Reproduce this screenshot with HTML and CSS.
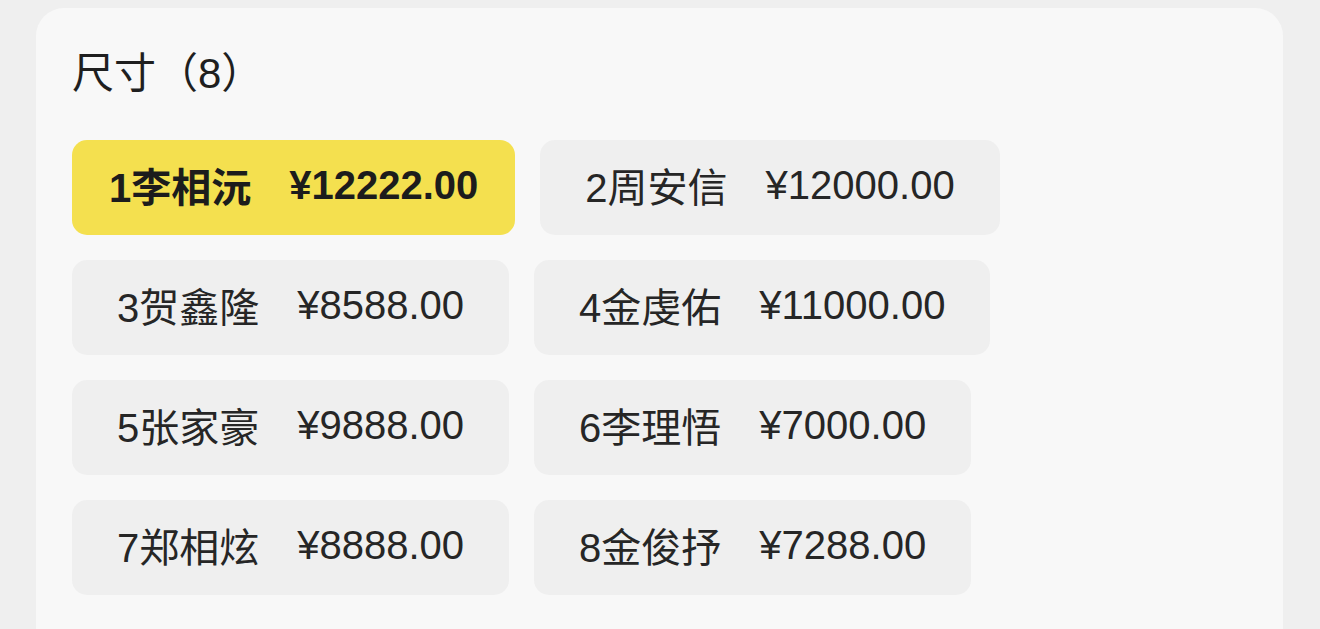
FILE: index.html
```html
<!DOCTYPE html>
<html lang="zh-CN">
<head>
<meta charset="utf-8">
<title>尺寸</title>
<link rel="stylesheet" href="styles.css">
</head>
<body>
<section class="card">
  <h2 class="title">尺寸（8）</h2>
  <div class="options">
    <div class="chip chip-active"><span class="name">1李相沅</span><span class="price">¥12222.00</span></div>
    <div class="chip"><span class="name">2周安信</span><span class="price">¥12000.00</span></div>
    <div class="chip"><span class="name">3贺鑫隆</span><span class="price">¥8588.00</span></div>
    <div class="chip"><span class="name">4金虔佑</span><span class="price">¥11000.00</span></div>
    <div class="chip"><span class="name">5张家豪</span><span class="price">¥9888.00</span></div>
    <div class="chip"><span class="name">6李理悟</span><span class="price">¥7000.00</span></div>
    <div class="chip"><span class="name">7郑相炫</span><span class="price">¥8888.00</span></div>
    <div class="chip"><span class="name">8金俊抒</span><span class="price">¥7288.00</span></div>
  </div>
</section>
</body>
</html>
```
FILE: styles.css
```css
html, body {
  margin: 0;
  padding: 0;
}
body {
  background: #efefef;
  font-family: "Liberation Sans", "Noto Sans CJK SC", sans-serif;
  color: #222222;
  overflow: hidden;
}
.card {
  margin: 8px 0 0 36px;
  width: 1247px;
  min-height: 700px;
  box-sizing: border-box;
  background: #f8f8f8;
  border-radius: 28px;
  padding: 46px 36px 0 36px;
}
.title {
  margin: 0;
  font-size: 42px;
  line-height: 40px;
  height: 40px;
  font-weight: 400;
  color: #1f1f1f;
}
.options {
  margin-top: 46px;
  display: flex;
  flex-wrap: wrap;
  gap: 25px;
  width: 950px;
}
.chip {
  height: 95px;
  box-sizing: border-box;
  padding: 0 45px 5px 45px;
  display: flex;
  align-items: center;
  background: #efefef;
  border-radius: 15px;
  font-size: 40px;
  color: #262626;
  white-space: nowrap;
}
.chip-active {
  background: #f4e04f;
  font-weight: 700;
  color: #1c1c1c;
  padding: 0 37px 5px 37px;
}
.price {
  margin-left: 38px;
}
```
